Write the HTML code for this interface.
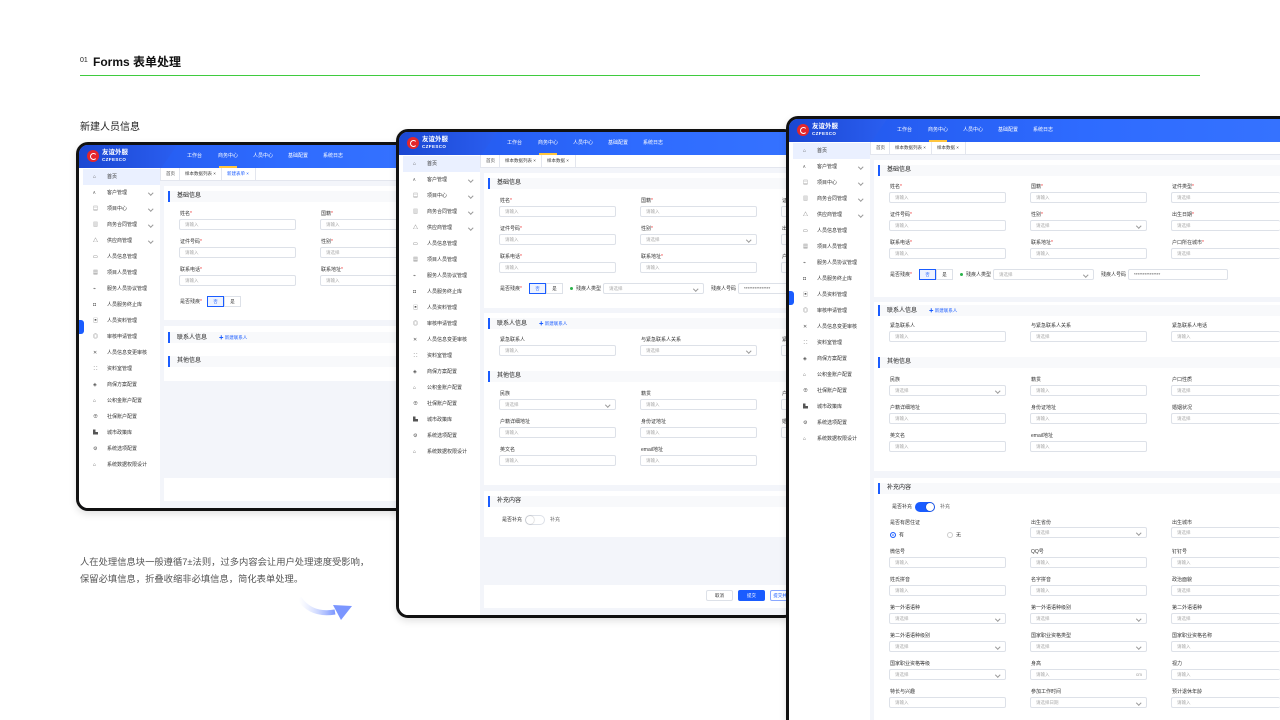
<!DOCTYPE html>
<html><head><meta charset="utf-8"><style>
*{margin:0;padding:0;box-sizing:border-box}
html{width:1280px;height:720px;overflow:hidden}
body{width:1280px;height:720px;background:#fff;position:relative;overflow:hidden;font-family:"Liberation Sans","Noto Sans CJK SC",sans-serif;color:#222}
.f{position:absolute;border:3px solid #111;border-radius:12px;background:#f3f5fa;overflow:hidden;box-shadow:0 3px 8px rgba(0,0,0,.12)}
.a{position:absolute}
.hd{position:absolute;left:0;top:0;right:0;height:23px;background:linear-gradient(90deg,#2155ea,#2e6bff 60%,#3572ff)}
.lg{position:absolute;left:0;top:0;width:98px;height:23px;background:linear-gradient(90deg,#1b47d2,#2a5ef0);clip-path:polygon(0 0,100% 0,84% 100%,0 100%)}
.lc{position:absolute;left:8px;top:5px;width:12px;height:12px;border-radius:50%;background:#e4262b}
.lc:after{content:"";position:absolute;left:3px;top:3px;width:5px;height:5px;border:1.5px solid #fff;border-right-color:transparent;border-radius:50%}
.lt{position:absolute;left:23px;top:4px;color:#fff;font-size:6.5px;font-weight:bold;line-height:7px}
.lt2{position:absolute;left:23px;top:12px;color:#fff;font-size:4.5px;font-weight:bold;letter-spacing:.4px;line-height:5px}
.nv{position:absolute;top:8px;color:#fff;font-size:5px;line-height:6px}
.ul{position:absolute;top:21px;height:1.5px;width:18px;background:#ffc53d}
.sb{position:absolute;left:0;top:23px;width:81px;bottom:0;background:#fff;padding-top:1px}
.si{position:relative;height:16px;line-height:16px;font-size:5px;color:#333;padding-left:24px;margin-left:4px;width:77px}
.si u{position:absolute;left:10px;text-decoration:none;color:#555;font-size:5px}
.si.on{background:#eaf0ff}
.si.c:after{content:"";position:absolute;right:8px;top:6px;width:2.5px;height:2.5px;border-right:.7px solid #999;border-bottom:.7px solid #999;transform:rotate(45deg)}
.tb{position:absolute;left:81px;top:23px;right:0;height:13px;background:#fff;border-bottom:1px solid #e3e6ee;border-left:1px solid #e3e6ee}
.tg{position:absolute;top:0;height:12px;line-height:12px;font-size:4.5px;color:#444;border-right:1px solid #e3e6ee;padding-left:5px}
.cd{position:absolute;left:85px;right:4px;background:#fff}
.sh{position:absolute;left:89px;right:4px;height:11px;background:#f8f9fb;border-left:2px solid #1a5cff;font-size:6px;line-height:11px;padding-left:7px;color:#222}
.sh em{font-style:normal;color:#1a5cff;font-size:4.5px;margin-left:12px}
.l{position:absolute;font-size:5px;line-height:6px;color:#333;white-space:nowrap}
.l b{color:#e33;font-weight:normal}
.i{position:absolute;width:117px;height:11px;border:1px solid #dde1e8;border-radius:2px;font-size:4.5px;line-height:9px;padding-left:5px;color:#aaa;background:#fff;white-space:nowrap;overflow:visible}
.s:after{content:"";position:absolute;right:6px;top:2.5px;width:2.5px;height:2.5px;border-right:.7px solid #999;border-bottom:.7px solid #999;transform:rotate(45deg)}
.bt{position:absolute;height:11px;width:17px;border:1px solid #dde1e8;font-size:4.5px;line-height:9px;text-align:center;background:#fff;color:#333}
.tgl{position:absolute;width:20px;height:10px;border-radius:5px;border:1px solid #dde1e8;background:#fff}
.tgl:after{content:"";position:absolute;left:0;top:0;width:8px;height:8px;border-radius:50%;background:#fff;box-shadow:0 0 1.5px rgba(0,0,0,.4)}
.tgl.on{background:#1a5cff;border-color:#1a5cff}
.tgl.on:after{left:10px}
.ft{position:absolute;height:11px;border:1px solid #dde1e8;border-radius:2px;font-size:4.5px;line-height:9px;text-align:center;background:#fff;color:#333;width:27px}
.col{position:absolute;left:0;width:5px;height:14px;background:#1a5cff;border-radius:0 3px 3px 0}
.dot{display:inline-block;width:3px;height:3px;border-radius:50%;background:#2bb34a;margin-right:3px;vertical-align:middle}
</style></head><body>

<div class="a" style="left:80px;top:57px;font-size:7px;color:#222">01</div>
<div class="a" style="left:93px;top:53px;font-size:12px;font-weight:bold;color:#111">Forms 表单处理</div>
<div class="a" style="left:80px;top:75px;width:1120px;height:1px;background:#3fcb3f"></div>
<div class="a" style="left:80px;top:118px;font-size:10px;color:#222">新建人员信息</div>
<div class="a" style="left:80px;top:554px;font-size:9.3px;line-height:17px;color:#555">人在处理信息块一般遵循7±法则，过多内容会让用户处理速度受影响，<br>保留必填信息，折叠收缩非必填信息，简化表单处理。</div>
<svg class="a" style="left:295px;top:596px" width="62" height="30" viewBox="0 0 62 30"><defs><linearGradient id="g" x1="0" x2="1"><stop offset="0" stop-color="#c9d4ff" stop-opacity="0"/><stop offset="1" stop-color="#7b96ff"/></linearGradient></defs><path d="M4 2 Q16 20 40 16" stroke="url(#g)" stroke-width="5" fill="none"/><path d="M38 9 L57 10 L46 24 Z" fill="#7b96ff"/></svg>

<!-- PANEL 1 -->
<div class="f" style="left:76px;top:142px;width:340px;height:369px">
<div class="hd"></div><div class="lg"></div><div class="lc"></div><div class="lt">友谊外服</div><div class="lt2">CZFESCO</div>
<div class="nv" style="left:108px">工作台</div><div class="nv" style="left:139px">商务中心</div><div class="ul" style="left:140px"></div><div class="nv" style="left:174px">人员中心</div><div class="nv" style="left:209px">基础配置</div><div class="nv" style="left:244px">系统日志</div>
<div class="sb">
<div class="si on"><u>⌂</u>首页</div><div class="si c"><u>ᴀ</u>客户管理</div><div class="si c"><u>▤</u>项目中心</div><div class="si c"><u>▥</u>商务合同管理</div><div class="si c"><u>△</u>供应商管理</div><div class="si"><u>▭</u>人员信息管理</div><div class="si"><u>▦</u>项目人员管理</div><div class="si"><u>⌁</u>服务人员协议管理</div><div class="si"><u>◘</u>人员服务终止库</div><div class="si"><u>▣</u>人员资料管理</div><div class="si"><u>◎</u>审核申请管理</div><div class="si"><u>✕</u>人员信息变更审核</div><div class="si"><u>∷</u>资料室管理</div><div class="si"><u>◈</u>商保方案配置</div><div class="si"><u>⌂</u>公积金账户配置</div><div class="si"><u>⊕</u>社保账户配置</div><div class="si"><u>▙</u>城市政策库</div><div class="si"><u>⚙</u>系统选项配置</div><div class="si"><u>⌂</u>系统数据权限设计</div>
</div>
<div class="col" style="top:175px"></div>
<div class="tb"><div class="tg" style="left:0;width:19px">首页</div><div class="tg" style="left:19px;width:42px">样本数据列表 ×</div><div class="tg" style="left:61px;width:34px;color:#1a5cff">新建表单 ×</div></div>
<div class="cd" style="top:41px;height:134px"></div>
<div class="sh" style="top:46px">基础信息</div>
<div class="l" style="left:101px;top:66px">姓名<b>*</b></div><div class="i" style="left:100px;top:74px">请输入</div>
<div class="l" style="left:242px;top:66px">国籍<b>*</b></div><div class="i" style="left:241px;top:74px">请输入</div>
<div class="l" style="left:101px;top:94px">证件号码<b>*</b></div><div class="i" style="left:100px;top:102px">请输入</div>
<div class="l" style="left:242px;top:94px">性别<b>*</b></div><div class="i" style="left:241px;top:102px">请选择</div>
<div class="l" style="left:101px;top:122px">联系电话<b>*</b></div><div class="i" style="left:100px;top:130px">请输入</div>
<div class="l" style="left:242px;top:122px">联系地址<b>*</b></div><div class="i" style="left:241px;top:130px">请输入</div>
<div class="l" style="left:101px;top:154px">是否残疾<b>*</b></div><div class="bt" style="left:128px;top:151px;border-color:#1a5cff;color:#1a5cff;background:#eef3ff">否</div><div class="bt" style="left:145px;top:151px">是</div>
<div class="cd" style="top:181px;height:55px"></div>
<div class="sh" style="top:187px">联系人信息<em>✚ 新建联系人</em></div>
<div class="sh" style="top:211px">其他信息</div>
<div class="cd" style="top:333px;height:23px"></div>
</div>

<!-- PANEL 2 -->
<div class="f" style="left:396px;top:129px;width:400px;height:489px">
<div class="hd"></div><div class="lg"></div><div class="lc"></div><div class="lt">友谊外服</div><div class="lt2">CZFESCO</div>
<div class="nv" style="left:108px">工作台</div><div class="nv" style="left:139px">商务中心</div><div class="ul" style="left:140px"></div><div class="nv" style="left:174px">人员中心</div><div class="nv" style="left:209px">基础配置</div><div class="nv" style="left:244px">系统日志</div>
<div class="sb">
<div class="si on"><u>⌂</u>首页</div><div class="si c"><u>ᴀ</u>客户管理</div><div class="si c"><u>▤</u>项目中心</div><div class="si c"><u>▥</u>商务合同管理</div><div class="si c"><u>△</u>供应商管理</div><div class="si"><u>▭</u>人员信息管理</div><div class="si"><u>▦</u>项目人员管理</div><div class="si"><u>⌁</u>服务人员协议管理</div><div class="si"><u>◘</u>人员服务终止库</div><div class="si"><u>▣</u>人员资料管理</div><div class="si"><u>◎</u>审核申请管理</div><div class="si"><u>✕</u>人员信息变更审核</div><div class="si"><u>∷</u>资料室管理</div><div class="si"><u>◈</u>商保方案配置</div><div class="si"><u>⌂</u>公积金账户配置</div><div class="si"><u>⊕</u>社保账户配置</div><div class="si"><u>▙</u>城市政策库</div><div class="si"><u>⚙</u>系统选项配置</div><div class="si"><u>⌂</u>系统数据权限设计</div>
</div>
<div class="tb"><div class="tg" style="left:0;width:19px">首页</div><div class="tg" style="left:19px;width:42px">样本数据列表 ×</div><div class="tg" style="left:61px;width:34px">样本数据 ×</div></div>
<div class="cd" style="top:41px;height:135px"></div>
<div class="sh" style="top:46px">基础信息</div>
<div class="l" style="left:101px;top:66px">姓名<b>*</b></div><div class="i" style="left:100px;top:74px">请输入</div>
<div class="l" style="left:242px;top:66px">国籍<b>*</b></div><div class="i" style="left:241px;top:74px">请输入</div>
<div class="l" style="left:383px;top:66px">证件类型<b>*</b></div><div class="i" style="left:382px;top:74px">请选择</div>
<div class="l" style="left:101px;top:94px">证件号码<b>*</b></div><div class="i" style="left:100px;top:102px">请输入</div>
<div class="l" style="left:242px;top:94px">性别<b>*</b></div><div class="i s" style="left:241px;top:102px">请选择</div>
<div class="l" style="left:383px;top:94px">出生日期<b>*</b></div><div class="i" style="left:382px;top:102px">请选择</div>
<div class="l" style="left:101px;top:122px">联系电话<b>*</b></div><div class="i" style="left:100px;top:130px">请输入</div>
<div class="l" style="left:242px;top:122px">联系地址<b>*</b></div><div class="i" style="left:241px;top:130px">请输入</div>
<div class="l" style="left:383px;top:122px">户口所在城市<b>*</b></div><div class="i" style="left:382px;top:130px">请选择</div>
<div class="l" style="left:101px;top:154px">是否残疾<b>*</b></div><div class="bt" style="left:130px;top:151px;border-color:#1a5cff;color:#1a5cff;background:#eef3ff">否</div><div class="bt" style="left:147px;top:151px">是</div>
<div class="l" style="left:171px;top:154px"><span class="dot"></span>残疾人类型</div><div class="i s" style="left:204px;top:151px;width:101px">请选择</div>
<div class="l" style="left:312px;top:154px">残疾人号码</div><div class="i" style="left:339px;top:151px;width:52px;color:#555;overflow:hidden">***************</div>
<div class="cd" style="top:181px;height:172px"></div>
<div class="sh" style="top:186px">联系人信息<em>✚ 新建联系人</em></div>
<div class="l" style="left:101px;top:205px">紧急联系人</div><div class="i" style="left:100px;top:213px">请输入</div>
<div class="l" style="left:242px;top:205px">与紧急联系人关系</div><div class="i s" style="left:241px;top:213px">请选择</div>
<div class="l" style="left:383px;top:205px">紧急联系人电话</div><div class="i" style="left:382px;top:213px;width:10px">请</div>
<div class="sh" style="top:239px">其他信息</div>
<div class="l" style="left:101px;top:259px">民族</div><div class="i s" style="left:100px;top:267px">请选择</div>
<div class="l" style="left:242px;top:259px">籍贯</div><div class="i" style="left:241px;top:267px">请输入</div>
<div class="l" style="left:383px;top:259px">户口</div><div class="i" style="left:382px;top:267px;width:10px">请</div>
<div class="l" style="left:101px;top:287px">户籍详细地址</div><div class="i" style="left:100px;top:295px">请输入</div>
<div class="l" style="left:242px;top:287px">身份证地址</div><div class="i" style="left:241px;top:295px">请输入</div>
<div class="l" style="left:383px;top:287px">婚姻</div><div class="i" style="left:382px;top:295px;width:10px">请</div>
<div class="l" style="left:101px;top:315px">英文名</div><div class="i" style="left:100px;top:323px">请输入</div>
<div class="l" style="left:242px;top:315px">email地址</div><div class="i" style="left:241px;top:323px">请输入</div>
<div class="cd" style="top:359px;height:46px"></div>
<div class="sh" style="top:364px">补充内容</div>
<div class="l" style="left:103px;top:385px">是否补充</div><div class="tgl" style="left:126px;top:383px"></div><div class="l" style="left:151px;top:385px;color:#666">补充</div>
<div class="cd" style="top:453px;height:23px"></div>
<div class="ft" style="left:307px;top:458px">取消</div><div class="ft" style="left:339px;top:458px;background:#1a5cff;border-color:#1a5cff;color:#fff">提交</div><div class="ft" style="left:371px;top:458px;border-color:#8aa8ff;color:#1a5cff;width:20px;overflow:hidden">提交并</div>
</div>

<!-- PANEL 3 -->
<div class="f" style="left:786px;top:116px;width:494px;height:604px;border-right:none;border-bottom:none;border-radius:12px 0 0 0">
<div class="hd"></div><div class="lg"></div><div class="lc"></div><div class="lt">友谊外服</div><div class="lt2">CZFESCO</div>
<div class="nv" style="left:108px">工作台</div><div class="nv" style="left:139px">商务中心</div><div class="ul" style="left:140px"></div><div class="nv" style="left:174px">人员中心</div><div class="nv" style="left:209px">基础配置</div><div class="nv" style="left:244px">系统日志</div>
<div class="sb">
<div class="si on"><u>⌂</u>首页</div><div class="si c"><u>ᴀ</u>客户管理</div><div class="si c"><u>▤</u>项目中心</div><div class="si c"><u>▥</u>商务合同管理</div><div class="si c"><u>△</u>供应商管理</div><div class="si"><u>▭</u>人员信息管理</div><div class="si"><u>▦</u>项目人员管理</div><div class="si"><u>⌁</u>服务人员协议管理</div><div class="si"><u>◘</u>人员服务终止库</div><div class="si"><u>▣</u>人员资料管理</div><div class="si"><u>◎</u>审核申请管理</div><div class="si"><u>✕</u>人员信息变更审核</div><div class="si"><u>∷</u>资料室管理</div><div class="si"><u>◈</u>商保方案配置</div><div class="si"><u>⌂</u>公积金账户配置</div><div class="si"><u>⊕</u>社保账户配置</div><div class="si"><u>▙</u>城市政策库</div><div class="si"><u>⚙</u>系统选项配置</div><div class="si"><u>⌂</u>系统数据权限设计</div>
</div>
<div class="col" style="top:172px"></div>
<div class="tb"><div class="tg" style="left:0;width:19px">首页</div><div class="tg" style="left:19px;width:42px">样本数据列表 ×</div><div class="tg" style="left:61px;width:34px">样本数据 ×</div></div>
<div class="cd" style="top:41px;height:137px;right:0"></div>
<div class="sh" style="top:46px;right:0">基础信息</div>
<div class="l" style="left:101px;top:65px">姓名<b>*</b></div><div class="i" style="left:100px;top:73px">请输入</div>
<div class="l" style="left:242px;top:65px">国籍<b>*</b></div><div class="i" style="left:241px;top:73px">请输入</div>
<div class="l" style="left:383px;top:65px">证件类型<b>*</b></div><div class="i" style="left:382px;top:73px;width:109px;border-right:none">请选择</div>
<div class="l" style="left:101px;top:93px">证件号码<b>*</b></div><div class="i" style="left:100px;top:101px">请输入</div>
<div class="l" style="left:242px;top:93px">性别<b>*</b></div><div class="i s" style="left:241px;top:101px">请选择</div>
<div class="l" style="left:383px;top:93px">出生日期<b>*</b></div><div class="i" style="left:382px;top:101px;width:109px;border-right:none">请选择</div>
<div class="l" style="left:101px;top:121px">联系电话<b>*</b></div><div class="i" style="left:100px;top:129px">请输入</div>
<div class="l" style="left:242px;top:121px">联系地址<b>*</b></div><div class="i" style="left:241px;top:129px">请输入</div>
<div class="l" style="left:383px;top:121px">户口所在城市<b>*</b></div><div class="i" style="left:382px;top:129px;width:109px;border-right:none">请选择</div>
<div class="l" style="left:101px;top:153px">是否残疾<b>*</b></div><div class="bt" style="left:130px;top:150px;border-color:#1a5cff;color:#1a5cff;background:#eef3ff">否</div><div class="bt" style="left:147px;top:150px">是</div>
<div class="l" style="left:171px;top:153px"><span class="dot"></span>残疾人类型</div><div class="i s" style="left:204px;top:150px;width:101px">请选择</div>
<div class="l" style="left:312px;top:153px">残疾人号码</div><div class="i" style="left:339px;top:150px;width:100px;color:#555">***************</div>
<div class="cd" style="top:183px;height:169px;right:0"></div>
<div class="sh" style="top:186px;right:0">联系人信息<em>✚ 新建联系人</em></div>
<div class="l" style="left:101px;top:204px">紧急联系人</div><div class="i" style="left:100px;top:212px">请输入</div>
<div class="l" style="left:242px;top:204px">与紧急联系人关系</div><div class="i" style="left:241px;top:212px">请选择</div>
<div class="l" style="left:383px;top:204px">紧急联系人电话</div><div class="i" style="left:382px;top:212px;width:109px;border-right:none">请输入</div>
<div class="sh" style="top:238px;right:0">其他信息</div>
<div class="l" style="left:101px;top:258px">民族</div><div class="i s" style="left:100px;top:266px">请选择</div>
<div class="l" style="left:242px;top:258px">籍贯</div><div class="i" style="left:241px;top:266px">请输入</div>
<div class="l" style="left:383px;top:258px">户口性质</div><div class="i" style="left:382px;top:266px;width:109px;border-right:none">请选择</div>
<div class="l" style="left:101px;top:286px">户籍详细地址</div><div class="i" style="left:100px;top:294px">请输入</div>
<div class="l" style="left:242px;top:286px">身份证地址</div><div class="i" style="left:241px;top:294px">请输入</div>
<div class="l" style="left:383px;top:286px">婚姻状况</div><div class="i" style="left:382px;top:294px;width:109px;border-right:none">请选择</div>
<div class="l" style="left:101px;top:314px">英文名</div><div class="i" style="left:100px;top:322px">请输入</div>
<div class="l" style="left:242px;top:314px">email地址</div><div class="i" style="left:241px;top:322px">请输入</div>
<div class="cd" style="top:359px;bottom:0;right:0"></div>
<div class="sh" style="top:364px;right:0">补充内容</div>
<div class="l" style="left:103px;top:385px">是否补充</div><div class="tgl on" style="left:126px;top:383px"></div><div class="l" style="left:151px;top:385px;color:#666">补充</div>
<div class="l" style="left:101px;top:401px">是否有居住证</div>
<div class="l" style="left:101px;top:413px"><span style="display:inline-block;width:6px;height:6px;border:1px solid #1a5cff;border-radius:50%;vertical-align:middle;position:relative;margin-right:3px;box-shadow:inset 0 0 0 1.2px #fff;background:#1a5cff"></span>有</div>
<div class="l" style="left:158px;top:413px"><span style="display:inline-block;width:6px;height:6px;border:1px solid #ccc;border-radius:50%;vertical-align:middle;margin-right:3px"></span>无</div>
<div class="l" style="left:242px;top:401px">出生省份</div><div class="i s" style="left:241px;top:408px">请选择</div>
<div class="l" style="left:383px;top:401px">出生城市</div><div class="i" style="left:382px;top:408px;width:109px;border-right:none">请选择</div>
<div class="l" style="left:101px;top:430px">微信号</div><div class="i" style="left:100px;top:438px">请输入</div>
<div class="l" style="left:242px;top:430px">QQ号</div><div class="i" style="left:241px;top:438px">请输入</div>
<div class="l" style="left:383px;top:430px">钉钉号</div><div class="i" style="left:382px;top:438px;width:109px;border-right:none">请输入</div>
<div class="l" style="left:101px;top:458px">姓氏拼音</div><div class="i" style="left:100px;top:466px">请输入</div>
<div class="l" style="left:242px;top:458px">名字拼音</div><div class="i" style="left:241px;top:466px">请输入</div>
<div class="l" style="left:383px;top:458px">政治面貌</div><div class="i" style="left:382px;top:466px;width:109px;border-right:none">请选择</div>
<div class="l" style="left:101px;top:486px">第一外语语种</div><div class="i s" style="left:100px;top:494px">请选择</div>
<div class="l" style="left:242px;top:486px">第一外语语种级别</div><div class="i s" style="left:241px;top:494px">请选择</div>
<div class="l" style="left:383px;top:486px">第二外语语种</div><div class="i" style="left:382px;top:494px;width:109px;border-right:none">请选择</div>
<div class="l" style="left:101px;top:514px">第二外语语种级别</div><div class="i s" style="left:100px;top:522px">请选择</div>
<div class="l" style="left:242px;top:514px">国家职业资格类型</div><div class="i s" style="left:241px;top:522px">请选择</div>
<div class="l" style="left:383px;top:514px">国家职业资格名称</div><div class="i" style="left:382px;top:522px;width:109px;border-right:none">请输入</div>
<div class="l" style="left:101px;top:542px">国家职业资格等级</div><div class="i s" style="left:100px;top:550px">请选择</div>
<div class="l" style="left:242px;top:542px">身高</div><div class="i" style="left:241px;top:550px">请输入<span style="position:absolute;right:4px;color:#999">cm</span></div>
<div class="l" style="left:383px;top:542px">视力</div><div class="i" style="left:382px;top:550px;width:109px;border-right:none">请输入</div>
<div class="l" style="left:101px;top:570px">特长与兴趣</div><div class="i" style="left:100px;top:578px">请输入</div>
<div class="l" style="left:242px;top:570px">参加工作时间</div><div class="i s" style="left:241px;top:578px">请选择日期</div>
<div class="l" style="left:383px;top:570px">预计退休年龄</div><div class="i" style="left:382px;top:578px;width:109px;border-right:none">请输入</div>
</div>
</body></html>
